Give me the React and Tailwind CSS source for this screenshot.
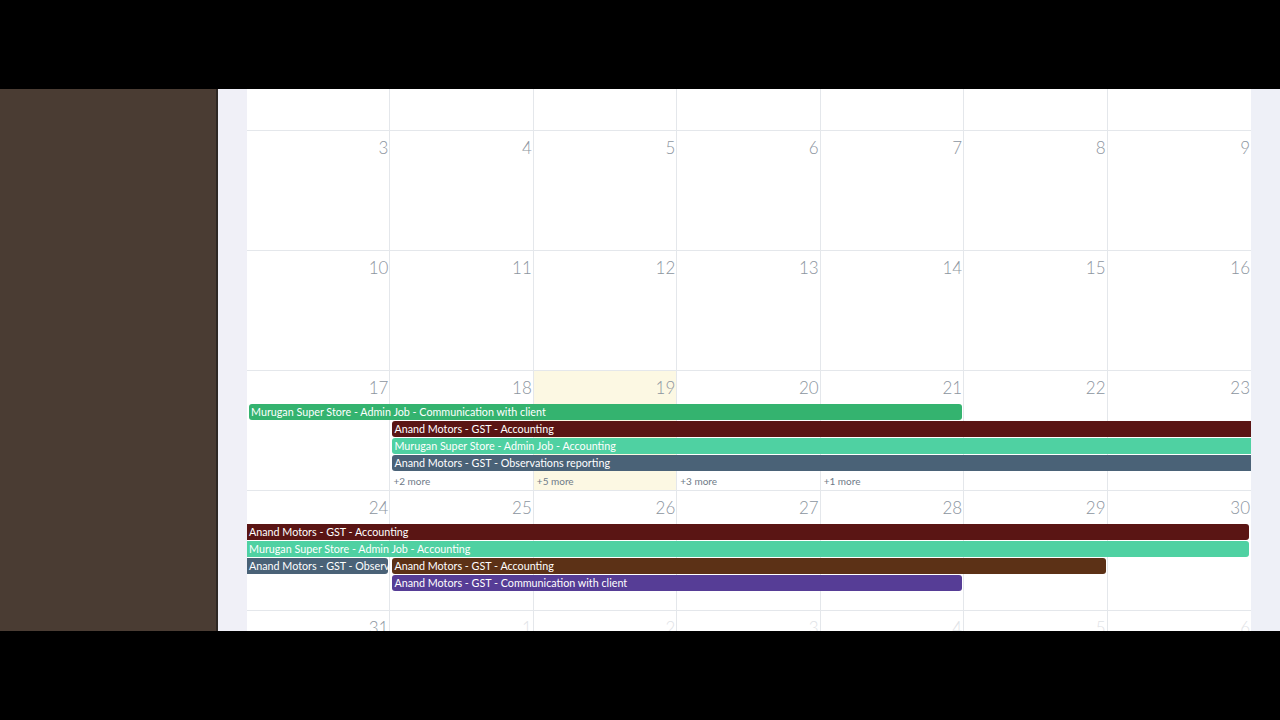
const colStart = {
  1: "col-start-1",
  2: "col-start-2",
  3: "col-start-3",
  4: "col-start-4",
  5: "col-start-5",
  6: "col-start-6",
  7: "col-start-7",
};
const colSpan = {
  1: "col-span-1",
  2: "col-span-2",
  3: "col-span-3",
  4: "col-span-4",
  5: "col-span-5",
  6: "col-span-6",
  7: "col-span-7",
};
const rowStart = {
  2: "row-start-2",
  3: "row-start-3",
  4: "row-start-4",
  5: "row-start-5",
};

const weeks = [
  { days: [3, 4, 5, 6, 7, 8, 9], events: [], more: {} },
  { days: [10, 11, 12, 13, 14, 15, 16], events: [], more: {} },
  {
    days: [17, 18, 19, 20, 21, 22, 23],
    today: 3,
    events: [
      { label: "Murugan Super Store - Admin Job - Communication with client", color: "bg-[#34b36f]", start: 1, span: 5, row: 2 },
      { label: "Anand Motors - GST - Accounting", color: "bg-[#5a1514]", start: 2, span: 6, row: 3, contR: true },
      { label: "Murugan Super Store - Admin Job - Accounting", color: "bg-[#4fd1a2]", start: 2, span: 6, row: 4, contR: true },
      { label: "Anand Motors - GST - Observations reporting", color: "bg-[#4a6277]", start: 2, span: 6, row: 5, contR: true },
    ],
    more: { 2: "+2 more", 3: "+5 more", 4: "+3 more", 5: "+1 more" },
  },
  {
    days: [24, 25, 26, 27, 28, 29, 30],
    events: [
      { label: "Anand Motors - GST - Accounting", color: "bg-[#5a1514]", start: 1, span: 7, row: 2, contL: true },
      { label: "Murugan Super Store - Admin Job - Accounting", color: "bg-[#4fd1a2]", start: 1, span: 7, row: 3, contL: true },
      { label: "Anand Motors - GST - Observations reporting", color: "bg-[#4a6277]", start: 1, span: 1, row: 4, contL: true },
      { label: "Anand Motors - GST - Accounting", color: "bg-[#5c3116]", start: 2, span: 5, row: 4 },
      { label: "Anand Motors - GST - Communication with client", color: "bg-[#563d96]", start: 2, span: 4, row: 5 },
    ],
    more: {},
  },
];

const Week = ({ week }) => {
  return (
    <div className="grid h-[120px] shrink-0 grid-cols-7 grid-rows-[33px_17px_17px_17px_17px_18px_1fr] border-b border-[#e4e7eb]">
      {week.days.map((d, i) => (
        <div
          key={d}
          className={`${colStart[i + 1]} row-span-full ${i < 6 ? "border-r border-[#e4e7eb]" : ""} ${
            week.today === i + 1 ? "bg-[#fcf8e3]" : ""
          } pr-[1px] pt-[7px] text-right text-[17px] font-light leading-[20px] text-[#8c95a0]`}
        >
          {d}
        </div>
      ))}
      {week.events.map((ev, i) => (
        <div
          key={i}
          className={`${colStart[ev.start]} ${colSpan[ev.span]} ${rowStart[ev.row]} h-4 self-start overflow-hidden whitespace-nowrap px-[2px] text-[10.75px] leading-4 text-white ${ev.color} ${
            ev.contL ? "" : "ml-[2px] rounded-l-[3px]"
          } ${ev.contR ? "" : "mr-[2px] rounded-r-[3px]"}`}
        >
          {ev.label}
        </div>
      ))}
      {Object.entries(week.more).map(([c, t]) => (
        <div
          key={c}
          className={`${colStart[c]} row-start-6 pl-[3px] text-[10px] leading-[18px] text-[#6f7b88]`}
        >
          {t}
        </div>
      ))}
    </div>
  );
};

const App = () => {
  return (
    <div className="flex h-[720px] w-[1280px] flex-col bg-black font-['Lato',sans-serif]">
      <div className="h-[89px] shrink-0" />
      <div className="flex h-[542px] shrink-0 overflow-hidden">
        <aside className="w-[218px] shrink-0 border-r-2 border-[#2e2824] bg-[#4a3c33]" />
        <main className="flex flex-1 bg-[#f0f0f7] pl-[29px]">
          <section className="flex w-[1004px] shrink-0 flex-col overflow-hidden bg-white">
            <div className="grid h-[42px] shrink-0 grid-cols-7 border-b border-[#e4e7eb]">
              {[0, 1, 2, 3, 4, 5, 6].map((i) => (
                <div key={i} className={i < 6 ? "border-r border-[#e4e7eb]" : ""} />
              ))}
            </div>
            {weeks.map((w) => (
              <Week key={w.days[0]} week={w} />
            ))}
            <div className="grid h-[120px] shrink-0 grid-cols-7">
              {[31, 1, 2, 3, 4, 5, 6].map((d, i) => (
                <div
                  key={d}
                  className={`${i < 6 ? "border-r border-[#e4e7eb]" : ""} pr-[1px] pt-[7px] text-right text-[17px] font-light leading-[20px] ${
                    i === 0 ? "text-[#8c95a0]" : "text-[#dfe3e7]"
                  }`}
                >
                  {d}
                </div>
              ))}
            </div>
          </section>
          <div className="flex-1 bg-[#eef0f7]" />
        </main>
      </div>
      <div className="flex-1" />
    </div>
  );
};

export default App;
